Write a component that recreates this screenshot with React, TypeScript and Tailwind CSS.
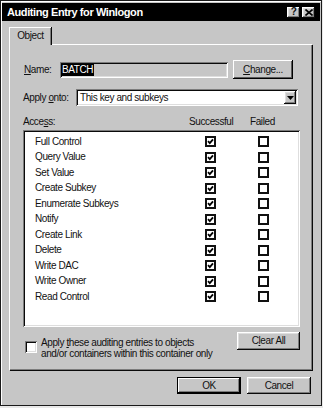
import React from "react";

const raised =
  "shadow-[inset_-1px_-1px_0_#0a0a0a,inset_1px_1px_0_#ffffff,inset_-2px_-2px_0_#7c7c7c,inset_2px_2px_0_#dedede]";
const sunken =
  "shadow-[inset_1px_1px_0_#7c7c7c,inset_-1px_-1px_0_#ffffff,inset_2px_2px_0_#0a0a0a,inset_-2px_-2px_0_#dedede]";

const rights = [
  "Full Control",
  "Query Value",
  "Set Value",
  "Create Subkey",
  "Enumerate Subkeys",
  "Notify",
  "Create Link",
  "Delete",
  "Write DAC",
  "Write Owner",
  "Read Control",
];

// list checkboxes print as a heavy black square in the scan
function Box({ checked }: { checked?: boolean }) {
  return (
    <span className="relative inline-block shrink-0 w-[11px] h-[11px] bg-white border-2 border-[#111]">
      {checked && (
        <svg viewBox="0 0 7 7" className="absolute inset-0 w-full h-full">
          <path d="M1 3.2 L2.8 5.2 L6 1.4" fill="none" stroke="#000" strokeWidth="1.8" />
        </svg>
      )}
    </span>
  );
}

function Button({ children, className = "" }: { children: React.ReactNode; className?: string }) {
  return (
    <div className={`flex items-center justify-center bg-[#c6c6c6] ${raised} ${className}`}>
      {children}
    </div>
  );
}

export default function App() {
  return (
    <div className="w-[323px] h-[408px] bg-[#e8e8e8] font-['Liberation_Sans',Arial,sans-serif] text-[10px] tracking-[-0.4px] text-[#111] leading-none">
      <div className="w-[322px] h-[406px] border border-[#1a1a1a] bg-[#c6c6c6] p-px shadow-[inset_1px_1px_0_#fff] flex flex-col">
        {/* title bar */}
        <div className="h-[18px] mt-px bg-black flex items-center pl-[5px] pr-[5px]">
          <span className="text-white font-bold text-[11px] tracking-[-0.4px]">Auditing Entry for Winlogon</span>
          <div className="ml-auto flex gap-[2px]">
            <Button className="w-[13px] h-[11px] font-bold text-[10px]">?</Button>
            <Button className="w-[13px] h-[11px]">
              <svg viewBox="0 0 8 7" className="w-[8px] h-[7px]">
                <path d="M0.5 0.5 L7.5 6.5 M7.5 0.5 L0.5 6.5" stroke="#000" strokeWidth="1.6" />
              </svg>
            </Button>
          </div>
        </div>

        {/* tab */}
        <div className="mt-[6px] ml-[7px] flex">
          <div className="relative z-10 w-[42px] h-[18px] -mb-px bg-[#c6c6c6] border-t border-l border-white shadow-[inset_-1px_0_0_#7c7c7c,1px_0_0_#0a0a0a] flex items-center justify-center pb-[2px]">
            Object
          </div>
        </div>

        {/* panel */}
        <div className="ml-[7px] w-[303px] h-[326px] border-t border-l border-white shadow-[inset_-1px_-1px_0_#7c7c7c,1px_1px_0_#0a0a0a] flex flex-col pl-[13px] pt-[15px]">
          <div className="flex items-center h-[19px]">
            <span className="w-[37px] pl-px">
              <u>N</u>ame:
            </span>
            <div className={`w-[168px] h-[16px] ${sunken} bg-[#c6c6c6] flex items-center pl-[1px]`}>
              <span className="bg-black text-white h-[12px] px-[1px] flex items-center">BATCH</span>
            </div>
            <Button className="ml-[5px] w-[60px] h-[19px] shadow-[inset_-1px_-1px_0_#000,inset_1px_1px_0_#fff,inset_-2px_-2px_0_#5a5a5a]">
              <u>C</u>hange...
            </Button>
          </div>

          <div className="flex items-center h-[17px] mt-[10px]">
            <span className="w-[53px]">
              Apply <u>o</u>nto:
            </span>
            <div className={`w-[222px] h-[17px] bg-white ${sunken} flex items-center pl-[4px] pr-[2px]`}>
              <span>This key and subkeys</span>
              <Button className="ml-auto w-[12px] h-[13px]">
                <svg viewBox="0 0 7 4" className="w-[7px] h-[4px]">
                  <path d="M0 0 H7 L3.5 4 Z" fill="#000" />
                </svg>
              </Button>
            </div>
          </div>

          <div className="flex items-center h-[11px] mt-[10px]">
            <span className="w-[166px]">
              Acce<u>s</u>s:
            </span>
            <span className="w-[61px]">Successful</span>
            <span>Failed</span>
          </div>

          <div className={`mt-[3px] w-[277px] h-[197px] bg-white ${sunken} pt-[4px] pl-[12px]`}>
            {rights.map((r) => (
              <div key={r} className="flex items-center h-[15.5px]">
                <span className="w-[170px]">{r}</span>
                <Box checked />
                <span className="w-[42px]" />
                <Box />
              </div>
            ))}
          </div>

          <div className="flex mt-[5px]">
            <div className="flex items-start pt-[9px] pl-[2px]">
              <span className={`inline-block shrink-0 w-[12px] h-[12px] bg-white ${sunken}`} />
              <div className="ml-[4px] -mt-[4px] leading-[11px]">
                <div>
                  Apply <u>t</u>hese auditing entries to objects
                </div>
                <div>and/or containers within this container only</div>
              </div>
            </div>
            <Button className="ml-auto mr-[12px] w-[63px] h-[18px]">
              C<u>l</u>ear All
            </Button>
          </div>
        </div>

        {/* dialog buttons */}
        <div className="flex justify-end gap-[6px] mt-[7px] pr-[9px]">
          <Button className="w-[64px] h-[17px] shadow-[inset_-1px_-1px_0_#000,inset_1px_1px_0_#000,inset_-2px_-2px_0_#000,inset_2px_2px_0_#fff,inset_-3px_-3px_0_#7c7c7c]">
            OK
          </Button>
          <Button className="w-[64px] h-[17px]">Cancel</Button>
        </div>
      </div>
    </div>
  );
}
